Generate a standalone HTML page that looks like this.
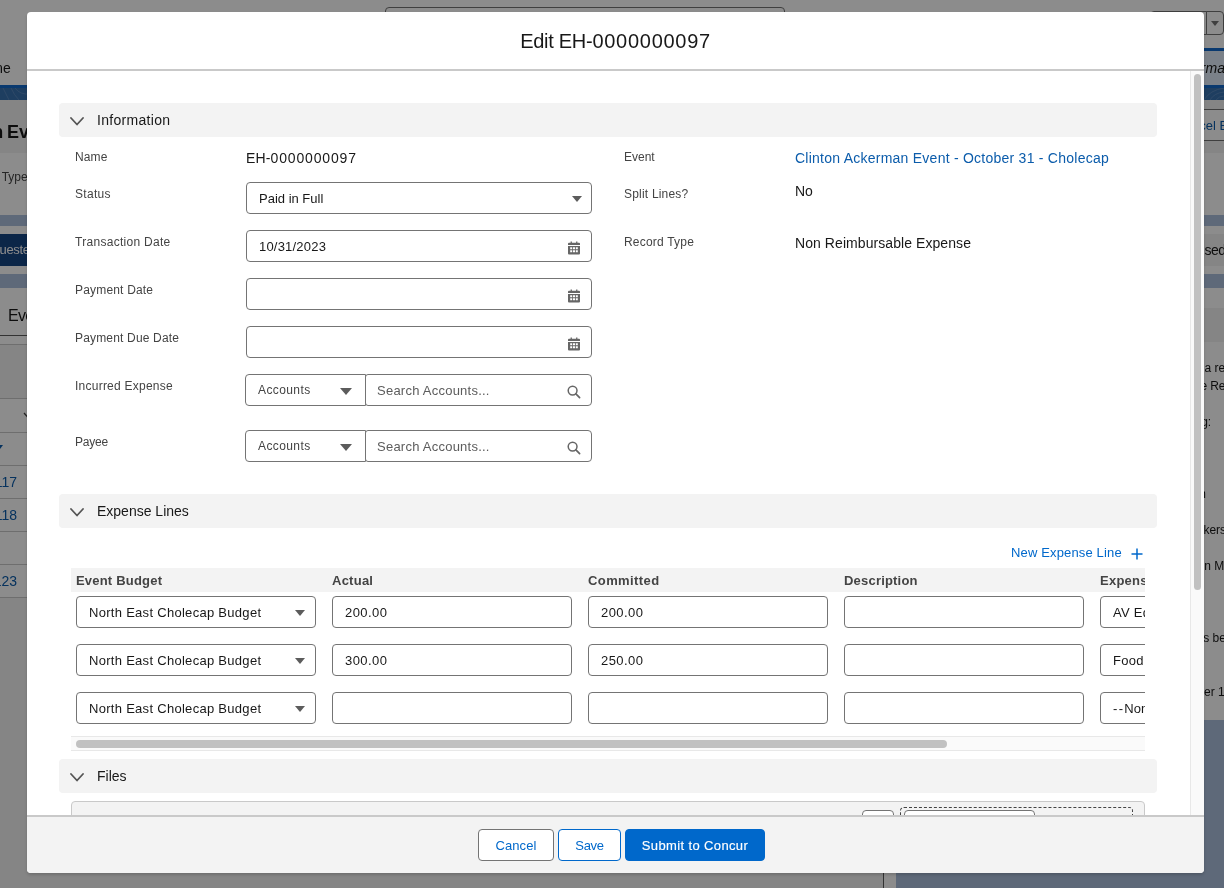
<!DOCTYPE html>
<html lang="en">
<head>
<meta charset="utf-8">
<title>Edit EH-0000000097</title>
<style>
*{box-sizing:border-box;margin:0;padding:0}
html,body{-webkit-font-smoothing:antialiased;width:1224px;height:888px;overflow:hidden;background:#fff;font-family:"Liberation Sans",sans-serif;color:#181818}
.bg *,.modal *{position:absolute}
.bg{will-change:transform;position:absolute;left:0;top:0;width:1224px;height:888px;overflow:hidden;background:#fff}
.ov{position:absolute;left:0;top:0;width:1224px;height:888px;background:rgba(0,0,0,.45)}
.t{white-space:nowrap;line-height:1}
.modal{will-change:transform;position:absolute;left:27px;top:12px;width:1177px;height:861px;background:#fff;border-radius:4px;overflow:hidden;box-shadow:0 2px 3px rgba(0,0,0,.16)}
.lbl{font-size:12px;color:#444;white-space:nowrap;line-height:14px}
.val{font-size:14px;color:#181818;white-space:nowrap;line-height:16px}
.sec{left:32px;width:1098px;height:34px;background:#f3f3f3;border-radius:4px}
.sec span{left:38px;top:9px;font-size:14px;line-height:16px;color:#181818;white-space:nowrap}
.sec svg{left:11px;top:14px}
.box{background:#fff;border:1px solid #747474;border-radius:4px;height:32px}
.box span{left:12px;top:8px;font-size:13px;line-height:15px;color:#181818;white-space:nowrap}
.tri{width:0;height:0;border-left:5px solid transparent;border-right:5px solid transparent;border-top:6px solid #5c5c5c}
.p12{font-size:12px;line-height:14px;color:#181818;white-space:nowrap}
.bg em,.modal em{position:static;font-style:inherit}
</style>
</head>
<body>
<div class="bg">
<div style="left:385px;top:7px;width:400px;height:32px;border:1px solid #747474;border-radius:4px"></div>
<div style="left:1150px;top:11px;width:57px;height:24px;border:1px solid #747474;border-radius:4px 0 0 4px"></div>
<div style="left:1206px;top:11px;width:18px;height:24px;border:1px solid #747474;border-radius:0 4px 4px 0"><div style="left:4px;top:9px;width:0;height:0;border-left:4.5px solid transparent;border-right:4.5px solid transparent;border-top:5.5px solid #747474"></div></div>
<div style="left:1100px;top:48px;width:124px;height:37px;background:#e1ecf9;"></div>
<div style="left:1100px;top:48px;width:124px;height:3px;background:#1269cb;"></div>
<div class="t" style="right:18.5px;top:60px;font-size:14px;line-height:16px;font-style:italic;color:#181818">Clinton Acker</div>
<div class="t" style="left:1205.5px;top:60px;font-size:14px;line-height:16px;font-style:italic;color:#181818">man Event</div>
<div class="t" style="right:1213.2px;top:60px;font-size:14px;line-height:16px;color:#181818">Home</div>
<div style="left:0px;top:85px;width:1224px;height:15px;background:#3871af;"></div>
<div style="left:0px;top:85px;width:1224px;height:3px;background:#1269cb;"></div>
<svg style="left:0;top:88px" width="30" height="12" viewBox="0 0 30 12"><path d="M3 0 L9 12 M11 0 Q14 7 19 12 M15 0 Q20 7 30 6" stroke="#5d8cc0" stroke-width="0.8" fill="none"/></svg>
<svg style="left:1200px;top:88px" width="24" height="12" viewBox="0 0 24 12"><path d="M4 12 Q10 2 24 0 M10 12 Q14 5 24 4 M16 12 Q19 8 24 8" stroke="#5d8cc0" stroke-width="0.8" fill="none"/></svg>
<div style="left:0px;top:100px;width:1224px;height:53px;background:#f3f3f3;"></div>
<div class="t" style="right:1220.8px;top:122px;font-size:18px;line-height:20px;font-weight:bold;color:#181818">Clinton Ackerman</div>
<div class="t" style="left:7px;top:122px;font-size:18px;line-height:20px;font-weight:bold;color:#181818">Event - October 31</div>
<div style="left:1150px;top:109px;width:90px;height:32px;background:#fff;border:1px solid #747474"></div>
<div class="t" style="right:18.2px;top:118px;font-size:13px;line-height:15px;color:#0b5cab">Canc</div>
<div class="t" style="left:1205.8px;top:118px;font-size:13px;line-height:15px;color:#0b5cab">el Event</div>
<div style="left:0px;top:153px;width:1224px;height:62px;background:#fff;"></div>
<div class="t" style="right:1225.5px;top:170px;font-size:12px;line-height:14px;color:#444">Event</div>
<div class="t" style="left:1.7px;top:170px;font-size:12px;line-height:14px;color:#444">Type</div>
<div style="left:0px;top:215px;width:1224px;height:11px;background:#abbfdc;"></div>
<div style="left:0px;top:226px;width:1224px;height:48px;background:#fff;"></div>
<div style="left:0px;top:234px;width:600px;height:32px;background:#154584;"></div>
<div class="t" style="right:1224.5px;top:242px;font-size:13px;line-height:16px;color:#fff">Req</div>
<div class="t" style="left:-0.5px;top:242px;font-size:13px;line-height:16px;color:#fff;letter-spacing:-0.3px">uested</div>
<div style="left:1100px;top:234px;width:124px;height:32px;background:#f3f3f3;"></div>
<div class="t" style="right:19.5px;top:242px;font-size:14px;line-height:16px;color:#181818">Clo</div>
<div class="t" style="left:1204.5px;top:242px;font-size:14px;line-height:16px;color:#181818;letter-spacing:-0.5px">sed</div>
<div style="left:0px;top:274px;width:1224px;height:14px;background:#abbfdc;"></div>
<div style="left:0px;top:288px;width:600px;height:48px;background:#fff;"></div>
<div class="t" style="left:8px;top:307px;font-size:16px;line-height:18px;color:#181818;letter-spacing:-0.7px">Events</div>
<div style="left:0px;top:335px;width:600px;height:1px;background:#5c5c5c;"></div>
<div style="left:0px;top:336px;width:600px;height:8px;background:#fff;"></div>
<div style="left:0px;top:344px;width:600px;height:1px;background:#c9c9c9;"></div>
<div style="left:0px;top:345px;width:600px;height:53px;background:#f3f3f3;"></div>
<div style="left:0px;top:398px;width:600px;height:1px;background:#c9c9c9;"></div>
<div style="left:0px;top:399px;width:600px;height:199px;background:#fff;"></div>
<svg style="left:23px;top:412px" width="10" height="7" viewBox="0 0 10 7"><path d="M1 1 L5 5.5 L9 1" stroke="#444" stroke-width="1.3" fill="none"/></svg>
<div style="left:0px;top:432px;width:600px;height:1px;background:#c9c9c9;"></div>
<div style="left:0px;top:465px;width:600px;height:1px;background:#c9c9c9;"></div>
<div style="left:0px;top:498px;width:600px;height:1px;background:#c9c9c9;"></div>
<div style="left:0px;top:531px;width:600px;height:1px;background:#c9c9c9;"></div>
<div style="left:0px;top:564px;width:600px;height:1px;background:#c9c9c9;"></div>
<div style="left:0px;top:597px;width:600px;height:1px;background:#c9c9c9;"></div>
<div style="left:-3px;top:445px;width:0;height:0;border-left:3.5px solid transparent;border-right:3.5px solid transparent;border-top:4px solid #0b5cab"></div>
<div class="t" style="right:1207px;top:474px;font-size:14px;line-height:16px;color:#0b5cab">EH-0000000117</div>
<div class="t" style="right:1207px;top:507px;font-size:14px;line-height:16px;color:#0b5cab">EH-0000000118</div>
<div class="t" style="right:1207px;top:573px;font-size:14px;line-height:16px;color:#0b5cab">EH-0000000123</div>
<div style="left:0px;top:598px;width:883px;height:290px;background:#f3f3f3;"></div>
<div style="left:612px;top:288px;width:612px;height:20px;background:#fff;"></div>
<div style="left:612px;top:308px;width:612px;height:34px;background:#f3f3f3;"></div>
<div style="left:612px;top:342px;width:612px;height:378px;background:#fff;"></div>
<div class="p12" style="left:1204.6px;top:360.8px;">a record</div>
<div class="p12" style="right:16.8px;top:378.7px;">the</div>
<div class="p12" style="left:1210.2px;top:378.7px;">Record</div>
<div class="p12" style="right:12.8px;top:414.7px;">following:</div>
<div class="p12" style="right:18.2px;top:486.7px;">Clinton</div>
<div class="p12" style="right:19.8px;top:522.7px;">Spea</div>
<div class="p12" style="left:1203.4px;top:522.7px;">kers</div>
<div class="p12" style="left:1204.2px;top:558.7px;">n Meeting</div>
<div class="p12" style="right:19.5px;top:630.7px;">ha</div>
<div class="p12" style="left:1203.2px;top:630.7px;">s been</div>
<div class="p12" style="right:20.0px;top:684.7px;">Octob</div>
<div class="p12" style="left:1204.0px;top:684.7px;">er 1</div>
<div style="left:883px;top:598px;width:13px;height:290px;background:#fff;"></div>
<div style="left:883px;top:720px;width:1px;height:168px;background:#5c5c5c;"></div>
<div style="left:896px;top:720px;width:328px;height:168px;background:#abbfdc;"></div>
</div>
<div class="ov"></div>
<div class="modal">
<div class="t" style="left:0;top:0;width:1177px;height:57px;text-align:center;font-size:20px;line-height:59px;color:#181818"><em style="letter-spacing:-0.27px">Edit EH-</em><em style="letter-spacing:0.72px">0000000097</em></div>
<div style="left:0;top:57px;width:1177px;height:2px;background:#c9c9c9"></div>
<div style="left:1163px;top:59px;width:14px;height:744px;background:#fafafa;border-left:1px solid #e8e8e8"></div>
<div style="left:1166.5px;top:62px;width:7.5px;height:516px;background:#c1c1c1;border-radius:4px"></div>
<div class="sec" style="top:91px"><svg width="14" height="9" viewBox="0 0 14 9"><path d="M1 1 L7 7.5 L13 1" fill="none" stroke="#555" stroke-width="1.8" stroke-linecap="round" stroke-linejoin="round"/></svg><span><em style="letter-spacing:0.3px">Information</em></span></div>
<div class="lbl" style="left:48px;top:138px"><em style="letter-spacing:0.1px">Name</em></div>
<div class="lbl" style="left:48px;top:175px"><em style="letter-spacing:0.3px">Status</em></div>
<div class="lbl" style="left:48px;top:223px"><em style="letter-spacing:0.29px">Transaction Date</em></div>
<div class="lbl" style="left:48px;top:271px"><em style="letter-spacing:0.18px">Payment Date</em></div>
<div class="lbl" style="left:48px;top:319px"><em style="letter-spacing:0.17px">Payment Due Date</em></div>
<div class="lbl" style="left:48px;top:367px"><em style="letter-spacing:0.24px">Incurred Expense</em></div>
<div class="lbl" style="left:48px;top:423px"><em style="letter-spacing:-0.2px">Payee</em></div>
<div class="lbl" style="left:597px;top:138px">Event</div>
<div class="lbl" style="left:597px;top:175px"><em style="letter-spacing:0.2px">Split Lines?</em></div>
<div class="lbl" style="left:597px;top:223px"><em style="letter-spacing:0.2px">Record Type</em></div>
<div class="val" style="left:219px;top:138px;"><em style="letter-spacing:0.13px">EH-</em><em style="letter-spacing:0.84px">0000000097</em></div>
<div class="val" style="left:768px;top:138px;color:#0b5cab"><em style="letter-spacing:0.245px">Clinton Ackerman Event - October 31 - Cholecap</em></div>
<div class="val" style="left:768px;top:171px;">No</div>
<div class="val" style="left:768px;top:223px;"><em style="letter-spacing:0.07px">Non Reimbursable Expense</em></div>
<div class="box" style="left:219px;top:170px;width:346px"><span>Paid in Full</span><div class="tri" style="left:325px;top:13px"></div></div>
<div class="box" style="left:219px;top:218px;width:346px"><span><em style="letter-spacing:0.2px">10/31/2023</em></span><div style="left:321px;top:10px;width:12px;height:14px"><svg width="12" height="14" viewBox="0 0 12 14"><path fill="#666" d="M2.6 0.4h1.3v1.4h4.2V0.4h1.3v1.4H11a1 1 0 0 1 1 1V4H0V2.8a1 1 0 0 1 1-1h1.6z"/><path fill="#666" fill-rule="evenodd" d="M0 5h12v7.6a1 1 0 0 1-1 1H1a1 1 0 0 1-1-1zM2.2 6.3v2h2v-2zm2.8 0v2h2v-2zm2.8 0v2h2v-2zM2.2 9.2v2h2v-2zm2.8 0v2h2v-2zm2.8 0v2h2v-2z"/></svg></div></div>
<div class="box" style="left:219px;top:266px;width:346px"><span></span><div style="left:321px;top:10px;width:12px;height:14px"><svg width="12" height="14" viewBox="0 0 12 14"><path fill="#666" d="M2.6 0.4h1.3v1.4h4.2V0.4h1.3v1.4H11a1 1 0 0 1 1 1V4H0V2.8a1 1 0 0 1 1-1h1.6z"/><path fill="#666" fill-rule="evenodd" d="M0 5h12v7.6a1 1 0 0 1-1 1H1a1 1 0 0 1-1-1zM2.2 6.3v2h2v-2zm2.8 0v2h2v-2zm2.8 0v2h2v-2zM2.2 9.2v2h2v-2zm2.8 0v2h2v-2zm2.8 0v2h2v-2z"/></svg></div></div>
<div class="box" style="left:219px;top:314px;width:346px"><span></span><div style="left:321px;top:10px;width:12px;height:14px"><svg width="12" height="14" viewBox="0 0 12 14"><path fill="#666" d="M2.6 0.4h1.3v1.4h4.2V0.4h1.3v1.4H11a1 1 0 0 1 1 1V4H0V2.8a1 1 0 0 1 1-1h1.6z"/><path fill="#666" fill-rule="evenodd" d="M0 5h12v7.6a1 1 0 0 1-1 1H1a1 1 0 0 1-1-1zM2.2 6.3v2h2v-2zm2.8 0v2h2v-2zm2.8 0v2h2v-2zM2.2 9.2v2h2v-2zm2.8 0v2h2v-2zm2.8 0v2h2v-2z"/></svg></div></div>
<div class="box" style="left:218px;top:362px;width:121px;border-radius:4px 0 0 4px"><span style="font-size:12px;color:#444"><em style="letter-spacing:0.4px">Accounts</em></span><div class="tri" style="left:94px;top:13px;border-left-width:6px;border-right-width:6px;border-top-width:7px"></div></div>
<div class="box" style="left:338px;top:362px;width:227px;border-radius:3px 4px 4px 3px"><span style="color:#5c5c5c;left:11px"><em style="letter-spacing:0.24px">Search Accounts...</em></span><div style="left:201px;top:10px;width:14px;height:14px"><svg width="14" height="14" viewBox="0 0 14 14"><circle cx="5.6" cy="5.6" r="4.4" fill="none" stroke="#666" stroke-width="1.5"/><path d="M8.9 8.9 L12.6 12.6" stroke="#666" stroke-width="1.7" stroke-linecap="round"/></svg></div></div>
<div class="box" style="left:218px;top:418px;width:121px;border-radius:4px 0 0 4px"><span style="font-size:12px;color:#444"><em style="letter-spacing:0.4px">Accounts</em></span><div class="tri" style="left:94px;top:13px;border-left-width:6px;border-right-width:6px;border-top-width:7px"></div></div>
<div class="box" style="left:338px;top:418px;width:227px;border-radius:3px 4px 4px 3px"><span style="color:#5c5c5c;left:11px"><em style="letter-spacing:0.24px">Search Accounts...</em></span><div style="left:201px;top:10px;width:14px;height:14px"><svg width="14" height="14" viewBox="0 0 14 14"><circle cx="5.6" cy="5.6" r="4.4" fill="none" stroke="#666" stroke-width="1.5"/><path d="M8.9 8.9 L12.6 12.6" stroke="#666" stroke-width="1.7" stroke-linecap="round"/></svg></div></div>
<div class="sec" style="top:482px"><svg width="14" height="9" viewBox="0 0 14 9"><path d="M1 1 L7 7.5 L13 1" fill="none" stroke="#555" stroke-width="1.8" stroke-linecap="round" stroke-linejoin="round"/></svg><span>Expense Lines</span></div>
<div class="t" style="left:984px;top:533px;font-size:13px;line-height:15px;color:#0068cb"><em style="letter-spacing:0.15px">New Expense Line</em></div>
<svg style="left:1104px;top:535.5px" width="12" height="12" viewBox="0 0 12 12"><path d="M6 0.5V11.5M0.5 6H11.5" stroke="#0068cb" stroke-width="1.5" fill="none"/></svg>
<div style="left:44px;top:556px;width:1074px;height:184px;overflow:hidden"><div style="left:0;top:0;width:1074px;height:24px;background:#f3f3f3"></div>
<div class="t" style="left:5px;top:5px;font-size:13px;line-height:15px;font-weight:bold;color:#444"><em style="letter-spacing:0.2px">Event Budget</em></div>
<div class="t" style="left:261px;top:5px;font-size:13px;line-height:15px;font-weight:bold;color:#444"><em style="letter-spacing:0.25px">Actual</em></div>
<div class="t" style="left:517px;top:5px;font-size:13px;line-height:15px;font-weight:bold;color:#444"><em style="letter-spacing:0.41px">Committed</em></div>
<div class="t" style="left:773px;top:5px;font-size:13px;line-height:15px;font-weight:bold;color:#444"><em style="letter-spacing:0.2px">Description</em></div>
<div class="t" style="left:1029px;top:5px;font-size:13px;line-height:15px;font-weight:bold;color:#444"><em style="letter-spacing:0.25px">Expense Type</em></div>
<div class="box" style="left:5px;top:28px;width:240px"><span><em style="letter-spacing:0.29px">North East Cholecap Budget</em></span><div class="tri" style="left:218px;top:13px"></div></div>
<div class="box" style="left:261px;top:28px;width:240px"><span><em style="letter-spacing:0.44px">200.00</em></span></div>
<div class="box" style="left:517px;top:28px;width:240px"><span><em style="letter-spacing:0.44px">200.00</em></span></div>
<div class="box" style="left:773px;top:28px;width:240px"></div>
<div class="box" style="left:1029px;top:28px;width:240px"><span><em style="letter-spacing:0.25px">AV Equipment</em></span></div>
<div class="box" style="left:5px;top:76px;width:240px"><span><em style="letter-spacing:0.29px">North East Cholecap Budget</em></span><div class="tri" style="left:218px;top:13px"></div></div>
<div class="box" style="left:261px;top:76px;width:240px"><span><em style="letter-spacing:0.44px">300.00</em></span></div>
<div class="box" style="left:517px;top:76px;width:240px"><span><em style="letter-spacing:0.44px">250.00</em></span></div>
<div class="box" style="left:773px;top:76px;width:240px"></div>
<div class="box" style="left:1029px;top:76px;width:240px"><span><em style="letter-spacing:0.25px">Food and Beverage</em></span></div>
<div class="box" style="left:5px;top:124px;width:240px"><span><em style="letter-spacing:0.29px">North East Cholecap Budget</em></span><div class="tri" style="left:218px;top:13px"></div></div>
<div class="box" style="left:261px;top:124px;width:240px"><span></span></div>
<div class="box" style="left:517px;top:124px;width:240px"><span></span></div>
<div class="box" style="left:773px;top:124px;width:240px"></div>
<div class="box" style="left:1029px;top:124px;width:240px"><span><em style="letter-spacing:1.3px">--</em>None--</span></div>
<div style="left:0;top:168px;width:1074px;height:15px;background:#fafafa;border-top:1px solid #e8e8e8;border-bottom:1px solid #e8e8e8"></div>
<div style="left:5px;top:172px;width:871px;height:7.5px;background:#c1c1c1;border-radius:4px"></div></div>
<div class="sec" style="top:747px"><svg width="14" height="9" viewBox="0 0 14 9"><path d="M1 1 L7 7.5 L13 1" fill="none" stroke="#555" stroke-width="1.8" stroke-linecap="round" stroke-linejoin="round"/></svg><span>Files</span></div>
<div style="left:44px;top:789px;width:1074px;height:60px;background:#f3f3f3;border:1px solid #c9c9c9;border-radius:4px"><div class="box" style="left:790px;top:8px;width:32px"></div><div style="left:828px;top:5px;width:233px;height:40px;border:1px dashed #444;border-radius:4px"></div><div class="box" style="left:832px;top:8px;width:131px"></div></div>
<div style="left:0;top:803px;width:1177px;height:58px;background:#f3f3f3;border-top:2px solid #c9c9c9"></div>
<div class="t" style="left:451px;top:817px;width:76px;height:32px;border-radius:4px;text-align:center;font-size:13px;line-height:32px;background:#fff;border:1px solid #747474;color:#0068cb"><em style="letter-spacing:0.1px">Cancel</em></div>
<div class="t" style="left:531px;top:817px;width:63px;height:32px;border-radius:4px;text-align:center;font-size:13px;line-height:32px;background:#fff;border:1px solid #0068cb;color:#0068cb"><em style="letter-spacing:-0.3px">Save</em></div>
<div class="t" style="left:598px;top:817px;width:140px;height:32px;border-radius:4px;text-align:center;font-size:13px;line-height:32px;background:#0068cb;border:1px solid #0068cb;color:#fff;-webkit-text-stroke:0.15px #fff"><em style="letter-spacing:0.37px">Submit to Concur</em></div>
</div>
</body>
</html>
